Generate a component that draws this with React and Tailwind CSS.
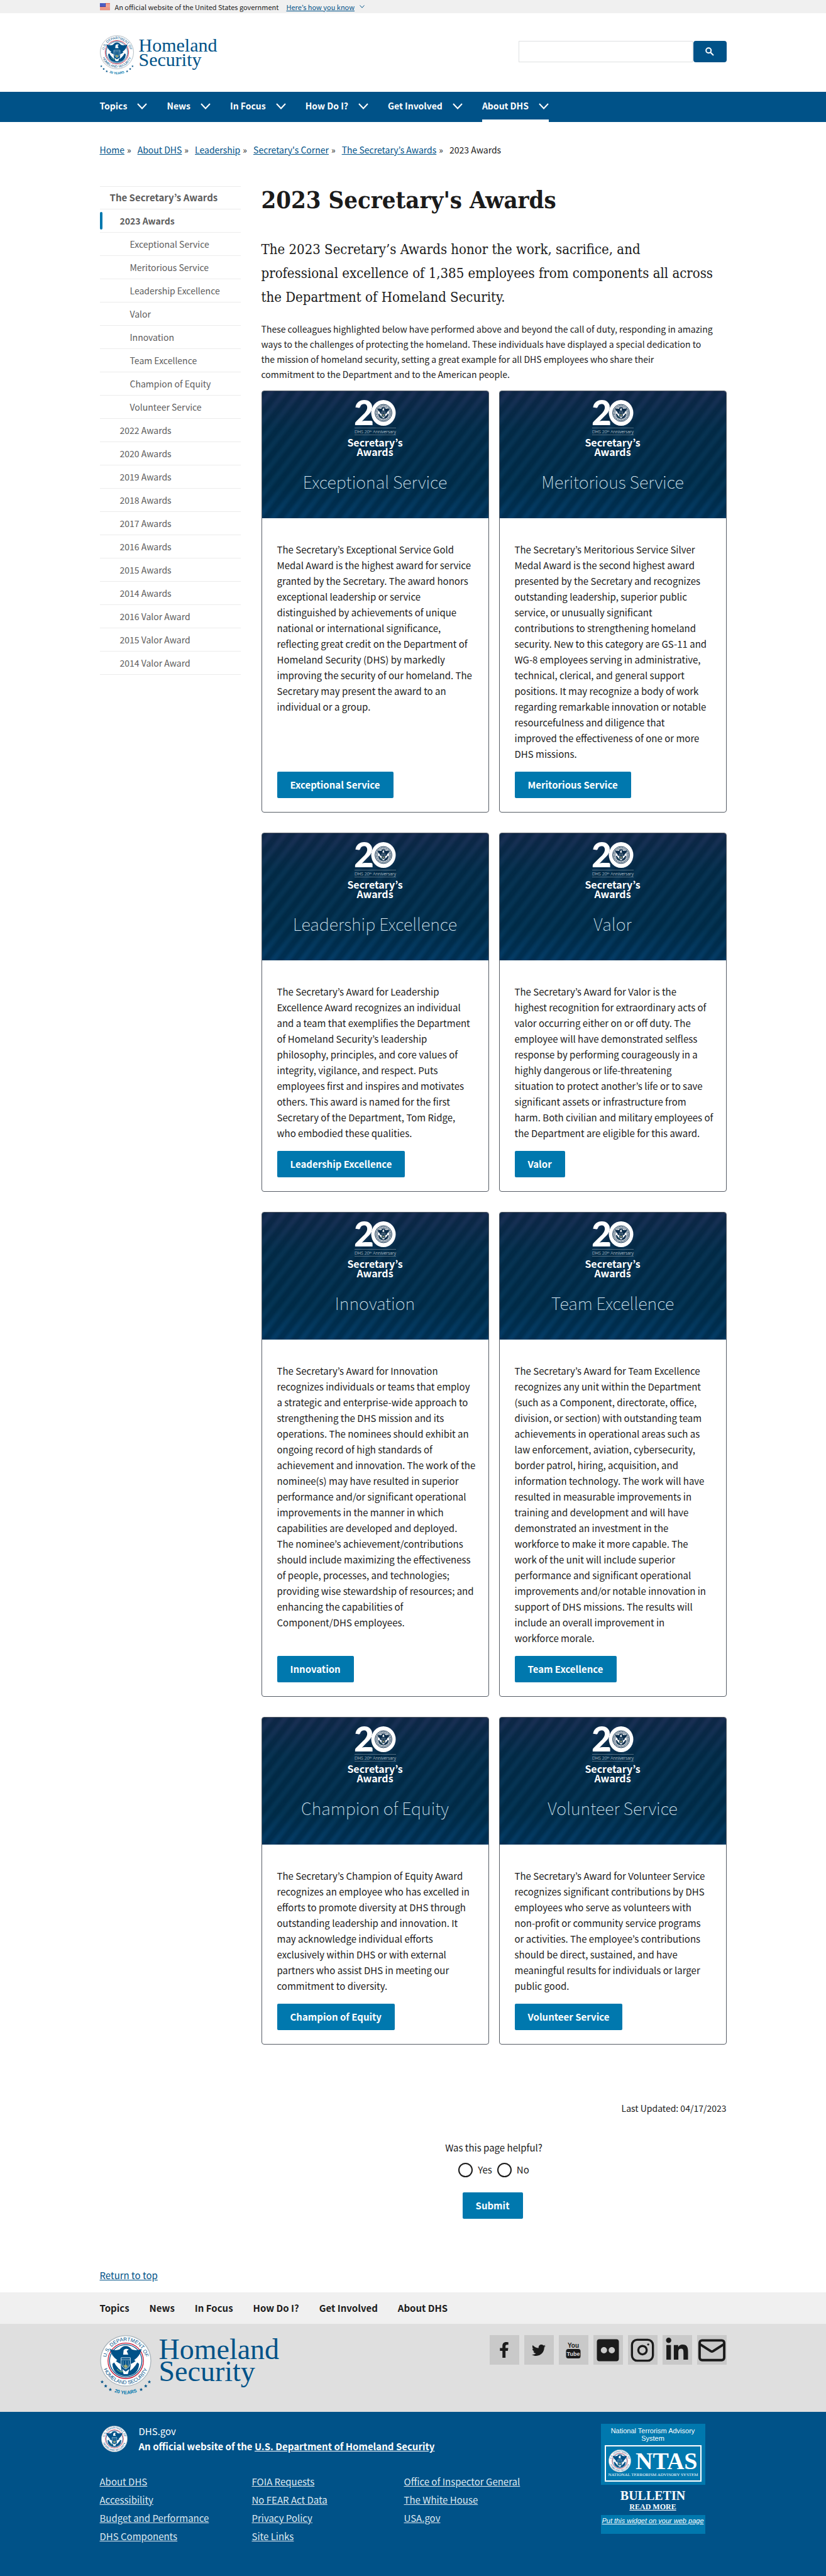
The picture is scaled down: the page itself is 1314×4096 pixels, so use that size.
import React, { useId } from "react";
import { FaFacebookF, FaTwitter, FaFlickr, FaLinkedinIn } from "react-icons/fa";
import { Instagram, Mail } from "lucide-react";

const navItems = ["Topics", "News", "In Focus", "How Do I?", "Get Involved", "About DHS"];

const crumbs = ["Home", "About DHS", "Leadership", "Secretary's Corner", "The Secretary’s Awards"];

const sideItems = [
  { label: "2023 Awards", level: 1, current: true },
  { label: "Exceptional Service", level: 2 },
  { label: "Meritorious Service", level: 2 },
  { label: "Leadership Excellence", level: 2 },
  { label: "Valor", level: 2 },
  { label: "Innovation", level: 2 },
  { label: "Team Excellence", level: 2 },
  { label: "Champion of Equity", level: 2 },
  { label: "Volunteer Service", level: 2 },
  { label: "2022 Awards", level: 1 },
  { label: "2020 Awards", level: 1 },
  { label: "2019 Awards", level: 1 },
  { label: "2018 Awards", level: 1 },
  { label: "2017 Awards", level: 1 },
  { label: "2016 Awards", level: 1 },
  { label: "2015 Awards", level: 1 },
  { label: "2014 Awards", level: 1 },
  { label: "2016 Valor Award", level: 1 },
  { label: "2015 Valor Award", level: 1 },
  { label: "2014 Valor Award", level: 1 },
];

const cards = [
  {
    title: "Exceptional Service",
    text: "The Secretary’s Exceptional Service Gold Medal Award is the highest award for service granted by the Secretary. The award honors exceptional leadership or service distinguished by achievements of unique national or international significance, reflecting great credit on the Department of Homeland Security (DHS) by markedly improving the security of our homeland. The Secretary may present the award to an individual or a group.",
  },
  {
    title: "Meritorious Service",
    text: "The Secretary’s Meritorious Service Silver Medal Award is the second highest award presented by the Secretary and recognizes outstanding leadership, superior public service, or unusually significant contributions\u00a0to strengthening homeland security. New to this category are GS-11 and WG-8 employees serving in administrative, technical, clerical, and general support positions. It may recognize a body of work regarding remarkable innovation or notable resourcefulness and diligence that improved\u00a0the effectiveness of one or more DHS\u00a0missions.",
  },
  {
    title: "Leadership Excellence",
    text: "The Secretary’s Award for Leadership Excellence Award recognizes an individual and a team that exemplifies the Department of Homeland Security’s leadership philosophy, principles, and core values of integrity, vigilance, and respect. Puts employees first and inspires and motivates others. This award is named for the first Secretary of the Department, Tom Ridge, who\u00a0embodied these qualities.",
  },
  {
    title: "Valor",
    text: "The Secretary’s Award for Valor is the highest\u00a0recognition for extraordinary acts of valor occurring either on or off duty. The employee will have demonstrated selfless response by performing courageously in a highly\u00a0dangerous or life-threatening situation\u00a0to protect another’s life or to save significant assets or infrastructure from harm. Both civilian and military employees of the Department are eligible for this award.",
  },
  {
    title: "Innovation",
    text: "The Secretary’s Award for Innovation recognizes individuals or teams that employ a\u00a0strategic and enterprise-wide approach to strengthening the DHS mission and its operations. The nominees should exhibit an ongoing record of high standards of achievement and innovation. The work of the nominee(s) may have resulted in superior performance and/or significant operational improvements in the manner in which capabilities are developed and deployed. The\u00a0nominee’s achievement/contributions should include maximizing the effectiveness of people, processes, and technologies; providing wise stewardship of resources; and enhancing the capabilities of Component/DHS employees.",
  },
  {
    title: "Team Excellence",
    text: "The Secretary’s Award for Team Excellence recognizes any unit within the Department (such as a Component, directorate, office, division, or section) with outstanding team achievements in operational areas such as law enforcement, aviation, cybersecurity, border patrol, hiring, acquisition, and information technology. The work will have resulted in measurable improvements in training and development and will have demonstrated an investment in the workforce\u00a0to make it more capable. The work\u00a0of the unit will include superior performance\u00a0and significant operational improvements and/or notable innovation in support of DHS missions. The results will include an overall improvement in workforce\u00a0morale.",
  },
  {
    title: "Champion of Equity",
    text: "The Secretary’s Champion of Equity Award recognizes an employee who has excelled in efforts to promote diversity at DHS through outstanding leadership and innovation. It may acknowledge individual efforts exclusively within DHS or with external partners who assist DHS in meeting our commitment to diversity.",
  },
  {
    title: "Volunteer Service",
    text: "The Secretary’s Award for Volunteer Service recognizes significant contributions by DHS employees who serve as volunteers with non-profit or community service programs or\u00a0activities. The employee’s contributions should be direct, sustained, and have meaningful results for individuals or larger public good.",
  },
];

const footerColumns = [
  ["About DHS", "Accessibility", "Budget and Performance", "DHS Components"],
  ["FOIA Requests", "No FEAR Act Data", "Privacy Policy", "Site Links"],
  ["Office of Inspector General", "The White House", "USA.gov"],
];

const container = "mx-auto w-full max-w-[997px]";

function Eagle({ blue = "#005288", white = "#ffffff" }) {
  return (
    <g>
      <path d="M24 56 Q25 78 50 80 Q75 78 76 56 L66 48 H34 Z" fill={blue} />
      <path d="M19 27 Q30 31 38 28 Q43 21 50 21 Q57 21 62 28 Q70 31 81 27 Q78 41 66 49 L58 56 H42 L34 49 Q22 41 19 27 Z" fill={blue} />
      <path d="M22 42 Q30 52 40 56 L42 70 Q30 62 22 42 Z" fill={white} />
      <path d="M78 42 Q70 52 60 56 L58 70 Q70 62 78 42 Z" fill={white} />
      <path d="M46 29 Q50 25 56 28 L52 31 L55 38 H45 Z" fill={white} />
      <path d="M41 44 H59 V55 Q58 62 50 66 Q42 62 41 55 Z" fill={blue} stroke={white} strokeWidth="1" />
      <path d="M41 48 H59" stroke={white} strokeWidth="0.8" />
      <path d="M45 50 V60 M50 50 V64 M55 50 V60" stroke="#9db9cc" strokeWidth="1" />
      <path d="M43 66 L50 71 L57 66 L54 76 H46 Z" fill={white} />
      <path d="M33 66 Q38 72 44 71" stroke="#5da27a" strokeWidth="2" fill="none" />
      <path d="M45 60 L50 57 L55 61 L50 65 Z" fill="#d8c96a" opacity="0.7" />
    </g>
  );
}

function SealArt({ id }) {
  return (
    <g>
      <circle cx="50" cy="50" r="49" fill="#ffffff" stroke="#a9b3ba" strokeWidth="1.6" />
      <circle cx="50" cy="50" r="34.5" fill="#ffffff" stroke="#c41230" strokeWidth="1.6" />
      <circle cx="50" cy="50" r="31.5" fill="none" stroke="#005288" strokeWidth="1.6" />
      <Eagle />
      <path id={`${id}-top`} d="M11.5 50 A38.5 38.5 0 0 1 88.5 50" fill="none" />
      <path id={`${id}-bottom`} d="M4.5 50 A45.5 45.5 0 0 0 95.5 50" fill="none" />
      <g fill="#005288" fontFamily="Liberation Sans, sans-serif" fontSize="10">
        <text textAnchor="middle">
          <textPath href={`#${id}-top`} startOffset="50%">U.S. DEPARTMENT OF</textPath>
        </text>
        <text textAnchor="middle">
          <textPath href={`#${id}-bottom`} startOffset="50%">HOMELAND SECURITY</textPath>
        </text>
      </g>
    </g>
  );
}

function Seal({ className }) {
  const id = useId();
  return (
    <svg viewBox="0 0 100 100" className={className} aria-hidden="true">
      <SealArt id={id} />
    </svg>
  );
}

function AnniversarySeal({ className }) {
  const id = useId();
  const stars = [[4, 91], [11, 99], [20, 106], [80, 106], [89, 99], [96, 91]];
  return (
    <svg viewBox="0 0 100 120" className={className} aria-hidden="true">
      <SealArt id={id} />
      {stars.map(([x, y]) => (
        <path
          key={x}
          transform={`translate(${x} ${y})`}
          d="M0 -3.4 L1 -1 L3.4 -1 L1.5 0.6 L2.2 3 L0 1.6 L-2.2 3 L-1.5 0.6 L-3.4 -1 L-1 -1 Z"
          fill="#005288"
        />
      ))}
      <path id={`${id}-years`} d="M18 106 Q50 124 82 106" fill="none" />
      <text fill="#0078ae" fontFamily="Liberation Sans, sans-serif" fontSize="9.5" fontWeight="bold" textAnchor="middle">
        <textPath href={`#${id}-years`} startOffset="50%">20 YEARS</textPath>
      </text>
    </svg>
  );
}

function Flag() {
  return (
    <svg viewBox="0 0 16 11" className="h-[11px] w-4" aria-hidden="true">
      <rect width="16" height="11" fill="#ffffff" />
      {[0, 2, 4, 6, 8, 10].map((y) => (
        <rect key={y} y={y} width="16" height="1" fill="#db3e1f" />
      ))}
      <rect width="9" height="6" fill="#1e33b1" />
      {[1, 3, 5].map((y) => [1, 3, 5, 7].map((x) => <rect key={`${x}-${y}`} x={x} y={y - 0.5} width="1" height="1" fill="#ffffff" opacity="0.8" />))}
    </svg>
  );
}

function Chevron({ className }) {
  return (
    <svg viewBox="0 0 16 10" className={className} fill="none" stroke="currentColor" strokeWidth="2" aria-hidden="true">
      <path d="M1 1 L8 8.5 L15 1" />
    </svg>
  );
}

function AnniversaryMark() {
  return (
    <svg viewBox="0 0 66 58" className="h-[58px] w-[66px] overflow-visible" role="img" aria-label="DHS 20th Anniversary">
      <text x="-1" y="40" fontFamily="Lato, sans-serif" fontWeight="900" fontSize="55" fill="#ffffff">2</text>
      <ellipse cx="46" cy="20.5" rx="19.5" ry="20.5" fill="#ffffff" />
      <circle cx="46" cy="20.5" r="13.5" fill="#ffffff" stroke="#0b2c4a" strokeWidth="1" />
      <circle cx="46" cy="20.5" r="11.5" fill="none" stroke="#0b2c4a" strokeWidth="1.6" strokeDasharray="1 0.7" />
      <circle cx="46" cy="20.5" r="9.6" fill="none" stroke="#0b2c4a" strokeWidth="0.8" />
      <g transform="translate(30.5 5) scale(0.31)">
        <Eagle blue="#0b2c4a" />
      </g>
      <path d="M0 44.5 H66 M0 55.5 H66" stroke="#8798a8" strokeWidth="0.6" />
      <text x="33" y="53" textAnchor="middle" fontFamily="Open Sans, sans-serif" fontWeight="300" fontSize="7" fill="#e4ebf0">
        DHS 20<tspan fontSize="4" dy="-2">th</tspan><tspan dy="2"> Anniversary</tspan>
      </text>
    </svg>
  );
}

function AwardCard({ title, text }) {
  return (
    <article className="flex flex-col overflow-hidden rounded border border-[#565c65] bg-white">
      <header className="flex h-[202px] flex-col items-center bg-[repeating-linear-gradient(128deg,rgba(0,34,58,0.45)_0px,rgba(0,34,58,0.45)_5px,rgba(30,66,96,0.12)_10px,rgba(30,66,96,0.12)_13px,rgba(0,34,58,0.45)_18px),linear-gradient(180deg,#192b50_0%,#04304f_30%,#003252_75%,#003a66_100%)] pt-[14px] text-white">
        <AnniversaryMark />
        <p className="mt-[2px] text-center text-[16px] leading-[15px] font-bold">
          Secretary’s
          <br />
          Awards
        </p>
        <h2 className="mt-[22px] text-[27px] leading-[36px] font-thin text-[#dcebf5]">{title}</h2>
      </header>
      <div className="flex flex-1 flex-col items-start pt-[37px] pr-5 pb-[22px] pl-6">
        <p className="mb-4 flex-1 text-[15px] leading-[25px]">{text}</p>
        <button type="button" className="h-[42px] rounded-[2px] bg-[#0078ae] px-[21px] text-[15px] leading-[20px] font-bold text-white">
          {title}
        </button>
      </div>
    </article>
  );
}

function YouTubeMark() {
  return (
    <svg viewBox="0 0 24 28" className="h-[28px] w-6" aria-hidden="true" fontFamily="Liberation Sans, sans-serif" fontWeight="bold">
      <text x="12" y="10" textAnchor="middle" fontSize="10" fill="#1b1b1b">You</text>
      <rect x="0.5" y="12" width="23" height="15" rx="3.5" fill="#1b1b1b" />
      <text x="12" y="23" textAnchor="middle" fontSize="9" fill="#dddddd">Tube</text>
    </svg>
  );
}

const social = [
  { name: "Facebook", icon: <FaFacebookF className="h-[25px] w-4" /> },
  { name: "Twitter", icon: <FaTwitter className="h-[22px] w-[22px]" /> },
  { name: "YouTube", icon: <YouTubeMark /> },
  { name: "Flickr", icon: <FaFlickr className="h-10 w-10" /> },
  { name: "Instagram", icon: <Instagram className="h-10 w-10" strokeWidth={2} /> },
  { name: "LinkedIn", icon: <FaLinkedinIn className="h-10 w-10" /> },
  { name: "Email", icon: <Mail className="h-12 w-12" strokeWidth={2} /> },
];

export default function App() {
  return (
    <div className="bg-white font-['Noto_Sans_CJK_KR','Open_Sans',sans-serif] text-[#1b1b1b]">
      <div className="bg-[#f0f0f0]">
        <div className={`${container} flex h-[21px] items-center text-[11px] leading-[20px]`}>
          <Flag />
          <span className="ml-2">An official website of the United States government</span>
          <button type="button" className="ml-3 flex items-center gap-2 text-[#005288]">
            <span className="underline">Here’s how you know</span>
            <Chevron className="h-[5px] w-2" />
          </button>
        </div>
      </div>

      <header className={`${container} flex h-[125px] items-start justify-between`}>
        <a href="#home" className="mt-[35px] flex items-start gap-2 text-[#005288]">
          <AnniversarySeal className="h-[65px] w-[54px]" />
          <span className="mt-1 font-['Liberation_Serif',serif] text-[30px] leading-[23px]">
            Homeland
            <br />
            Security
          </span>
        </a>
        <form className="mt-11 flex gap-px" onSubmit={(e) => e.preventDefault()}>
          <input type="search" aria-label="Search" className="h-[34px] w-[277px] border border-[#dfe1e2] px-2 text-[15px] outline-none" />
          <button type="submit" aria-label="Search" className="flex h-[34px] w-[53px] items-center justify-center rounded bg-[#005288] text-white">
            <svg viewBox="0 0 14 14" className="h-[14px] w-[14px]" fill="none" stroke="currentColor" strokeWidth="2" aria-hidden="true">
              <circle cx="5.2" cy="5.2" r="4" />
              <path d="M8.2 8.2 L13 13" />
            </svg>
          </button>
        </form>
      </header>

      <nav aria-label="Main" className="bg-[#005288]">
        <ul className={`${container} flex h-12 gap-[31px] text-white`}>
          {navItems.map((item, i) => (
            <li key={item} className="flex">
              <button
                type="button"
                className={
                  i === 5
                    ? "flex items-center gap-4 border-b-4 border-white pt-px text-[14px] font-bold"
                    : "flex items-center gap-4 border-b-4 border-transparent pt-px text-[14px] font-bold"
                }
              >
                {item}
                <Chevron className="h-[10px] w-4" />
              </button>
            </li>
          ))}
        </ul>
      </nav>

      <div className={container}>
        <nav aria-label="Breadcrumb" className="pt-8">
          <ol className="flex text-[14px] leading-[24px]">
            {crumbs.map((c) => (
              <li key={c} className="mr-[10px]">
                <a href="#crumb" className="text-[#005288] underline">{c}</a>
                <span className="ml-1">»</span>
              </li>
            ))}
            <li>2023 Awards</li>
          </ol>
        </nav>

        <div className="mt-[46px] flex">
          <nav aria-label="Section" className="w-[224px] shrink-0 text-[14px] text-[#5c5c5c]">
            <a href="#awards" className="flex h-[37px] items-center border-y border-[#ececec] pl-4 text-[15px] font-bold">
              The Secretary’s Awards
            </a>
            <ul>
              {sideItems.map((s) => (
                <li key={s.label} className="border-b border-[#ececec]">
                  {s.current ? (
                    <a href="#side" aria-current="page" className="flex h-9 items-center font-bold">
                      <span className="mr-7 h-7 w-1 rounded-full bg-[#0078ae]" />
                      {s.label}
                    </a>
                  ) : (
                    <a href="#side" className={s.level === 1 ? "flex h-9 items-center pl-8" : "flex h-9 items-center pl-12"}>
                      {s.label}
                    </a>
                  )}
                </li>
              ))}
            </ul>
          </nav>

          <main className="ml-[33px] min-w-0 flex-1">
            <h1 className="font-['DejaVu_Serif_Condensed','DejaVu_Serif',serif] text-[38px] leading-[44px] font-bold">2023 Secretary's Awards</h1>
            <p className="mt-[38px] max-w-[728px] font-['DejaVu_Serif_Condensed','DejaVu_Serif',serif] text-[22px] leading-[38px]">
              The 2023 Secretary’s Awards honor the work, sacrifice, and professional excellence of 1,385 employees from components all across the Department of Homeland Security.
            </p>
            <p className="mt-[19px] max-w-[721px] text-[14px] leading-[24px]">
              {"These colleagues highlighted below have performed above and beyond the call of duty, responding in amazing ways to the challenges of protecting the homeland. These individuals have displayed a special dedication to the mission of homeland security, setting a great example for all DHS employees who share their commitment\u00a0to the Department and to the American people."}
            </p>
            <div className="mt-[14px] grid grid-cols-2 gap-x-4 gap-y-8">
              {cards.map((c) => (
                <AwardCard key={c.title} {...c} />
              ))}
            </div>
            <p className="mt-[89px] text-right text-[14px] leading-[24px]">Last Updated: 04/17/2023</p>
            <form className="mt-[39px] flex flex-col items-center text-[15px] leading-[24px]" onSubmit={(e) => e.preventDefault()}>
              <fieldset className="flex flex-col items-center">
                <legend className="mx-auto">Was this page helpful?</legend>
                <div className="mt-[11px] flex items-center gap-2">
                  <label className="flex items-center gap-2">
                    <input type="radio" name="helpful" className="h-[23px] w-[23px] appearance-none rounded-full border-2 border-[#1b1b1b] bg-white" />
                    Yes
                  </label>
                  <label className="flex items-center gap-2">
                    <input type="radio" name="helpful" className="h-[23px] w-[23px] appearance-none rounded-full border-2 border-[#1b1b1b] bg-white" />
                    No
                  </label>
                </div>
              </fieldset>
              <button type="submit" className="mt-6 mr-1 h-[42px] w-24 rounded-[2px] bg-[#0078ae] font-bold text-white">Submit</button>
            </form>
          </main>
        </div>

        <div className="pt-[78px] pb-[15px] text-[15px] leading-[24px]">
          <a href="#top" className="text-[#005288] underline">Return to top</a>
        </div>
      </div>

      <footer>
        <nav aria-label="Footer" className="bg-[#f0f0f0]">
          <ul className={`${container} flex h-[50px] items-center gap-8 text-[15px] font-bold`}>
            {navItems.map((item) => (
              <li key={item}>
                <a href="#nav">{item}</a>
              </li>
            ))}
          </ul>
        </nav>

        <div className="bg-[#dfdfdf]">
          <div className={`${container} flex h-[140px] items-start justify-between pt-[18px]`}>
            <a href="#home" className="flex items-start gap-3 text-[#005288]">
              <AnniversarySeal className="h-[98px] w-[82px]" />
              <span className="mt-[5px] font-['Liberation_Serif',serif] text-[46px] leading-[35px]">
                Homeland
                <br />
                Security
              </span>
            </a>
            <ul className="flex gap-2 text-[#1b1b1b]">
              {social.map((s) => (
                <li key={s.name}>
                  <a href="#social" aria-label={s.name} className="flex h-[47px] w-[47px] items-center justify-center bg-[#c9c9c9]">
                    {s.icon}
                  </a>
                </li>
              ))}
            </ul>
          </div>
        </div>

        <div className="bg-[#005288] text-white">
          <div className={`${container} flex min-h-[261px] items-start justify-between pt-[19px]`}>
            <div>
              <div className="flex items-center">
                <Seal className="ml-[2px] h-[42px] w-[42px]" />
                <p className="ml-[18px] text-[15px] leading-[24px]">
                  DHS.gov
                  <br />
                  <span className="font-bold">
                    An official website of the{" "}
                    <a href="#dhs" className="underline">U.S. Department of Homeland Security</a>
                  </span>
                </p>
              </div>
              <div className="mt-[29px] flex text-[15px] leading-[29px] text-[#dfe8ef]">
                {footerColumns.map((col) => (
                  <ul key={col[0]} className="w-[242px]">
                    {col.map((l) => (
                      <li key={l}>
                        <a href="#footer" className="underline">{l}</a>
                      </li>
                    ))}
                  </ul>
                ))}
              </div>
            </div>

            <aside className="mr-[34px] w-[166px] text-center font-['Liberation_Sans',sans-serif] text-[11px] leading-[12px]">
              <div className="bg-[#0078ae] px-[6px] pt-[5px] pb-[5px]">
                <p>National Terrorism Advisory System</p>
                <div className="mt-[5px] border-2 border-white px-1 pt-[5px] pb-1">
                  <div className="flex items-center justify-between">
                    <Seal className="h-9 w-9" />
                    <span className="font-['Liberation_Serif',serif] text-[38px] leading-[36px] font-bold">NTAS</span>
                  </div>
                  <p className="font-['Liberation_Serif',serif] text-[7px] leading-[9px] whitespace-nowrap">NATIONAL TERRORISM ADVISORY SYSTEM</p>
                </div>
              </div>
              <div className="flex flex-col items-center pt-[7px] font-['Liberation_Serif',serif] font-bold">
                <span className="text-[20px] leading-[20px]">BULLETIN</span>
                <a href="#bulletin" className="text-[12px] leading-[16px] underline">READ MORE</a>
              </div>
              <div className="mt-[5px] h-[30px] bg-[#0078ae] pt-[3px] italic">
                <a href="#widget" className="whitespace-nowrap underline">Put this widget on your web page</a>
              </div>
            </aside>
          </div>
        </div>
      </footer>
    </div>
  );
}
